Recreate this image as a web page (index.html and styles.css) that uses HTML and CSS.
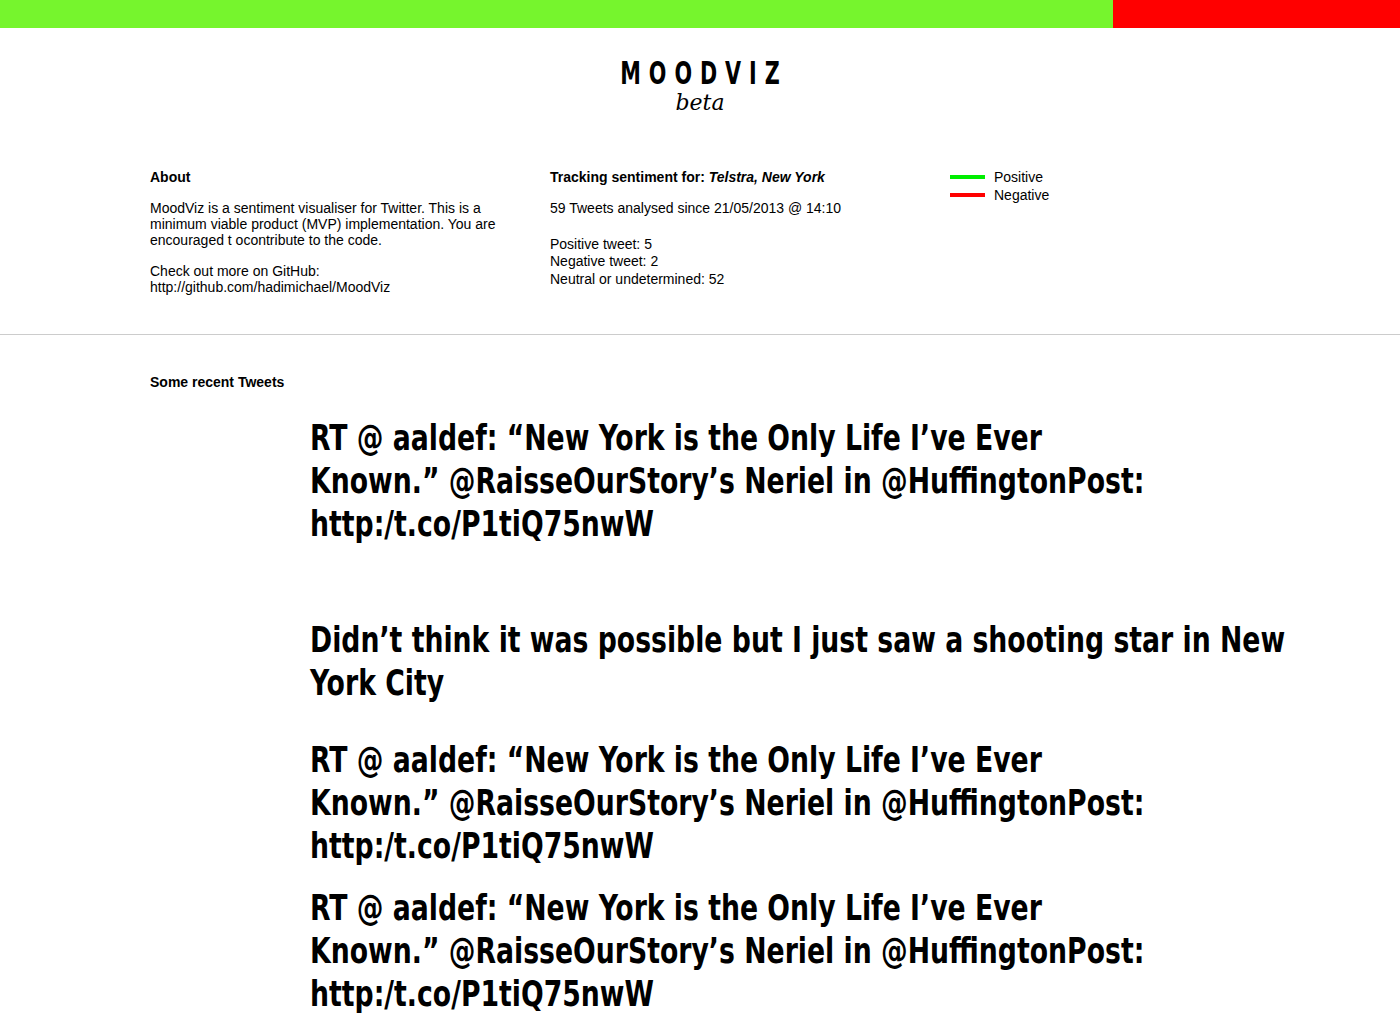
FILE: index.html
```html
<!DOCTYPE html>
<html>
<head>
<meta charset="utf-8">
<link rel="stylesheet" href="styles.css">
</head>
<body>
<div class="mood-bar">
  <div class="mood-pos"></div>
  <div class="mood-neg"></div>
</div>
<header class="brand">
  <div class="logo">MOODVIZ</div>
  <div class="beta">beta</div>
</header>
<section class="info">
  <div class="col">
    <h2>About</h2>
    <p class="about">MoodViz is a sentiment visualiser for Twitter. This is a minimum viable product (MVP) implementation. You are encouraged t ocontribute to the code.</p>
    <p class="about">Check out more on GitHub:<br>http://github.com/hadimichael/MoodViz</p>
  </div>
  <div class="col">
    <h2>Tracking sentiment for: <em>Telstra, New York</em></h2>
    <p class="stat">59 Tweets analysed since 21/05/2013 @ 14:10</p>
    <p class="stat">Positive tweet: 5<br>Negative tweet: 2<br>Neutral or undetermined: 52</p>
  </div>
  <div class="col">
    <ul class="legend">
      <li><span class="swatch pos"></span>Positive</li>
      <li><span class="swatch neg"></span>Negative</li>
    </ul>
  </div>
</section>
<hr class="rule">
<section class="recent">
  <h2>Some recent Tweets</h2>
  <div class="tweets">
    <p class="tweet">RT @ aaldef: “New York is the Only Life I’ve Ever Known.”&nbsp;@RaisseOurStory’s Neriel in @HuffingtonPost: http:/t.co/P1tiQ75nwW</p>
    <p class="tweet">Didn’t think it was possible but I just saw a shooting star in New York City</p>
    <p class="tweet">RT @ aaldef: “New York is the Only Life I’ve Ever Known.”&nbsp;@RaisseOurStory’s Neriel in @HuffingtonPost: http:/t.co/P1tiQ75nwW</p>
    <p class="tweet">RT @ aaldef: “New York is the Only Life I’ve Ever Known.”&nbsp;@RaisseOurStory’s Neriel in @HuffingtonPost: http:/t.co/P1tiQ75nwW</p>
  </div>
</section>
</body>
</html>
```
FILE: styles.css
```css
html, body {
  margin: 0;
  padding: 0;
  background: #fff;
  color: #000;
  font-family: "Liberation Sans", Arial, sans-serif;
  font-size: 14px;
  overflow-x: hidden;
}
.mood-bar {
  display: flex;
  height: 28px;
}
.mood-pos { background: #76f52d; flex: 0 0 1113px; }
.mood-neg { background: #ff0000; flex: 1; }

.brand {
  text-align: center;
  padding-top: 28px;
}
.logo {
  font-family: "DejaVu Sans Condensed", "DejaVu Sans", sans-serif;
  font-weight: bold;
  font-size: 32px;
  letter-spacing: 11px;
  line-height: 34px;
  padding-left: 11px;
  transform: scaleX(0.72);
}
.beta {
  font-family: "DejaVu Serif", serif;
  font-style: italic;
  font-size: 22px;
  line-height: 26px;
}

.info {
  width: 1100px;
  margin: 52px auto 0;
  display: grid;
  grid-template-columns: 400px 400px 300px;
}
.info h2 {
  font-size: 14px;
  font-weight: bold;
  margin: 0 0 14px;
  line-height: 18px;
}
.about {
  margin: 0 0 15px;
  line-height: 16px;
  padding-right: 40px;
}
.stat {
  margin: 0 0 18px;
  line-height: 17.5px;
}
.legend {
  list-style: none;
  margin: 0;
  padding: 0;
}
.legend li {
  display: flex;
  align-items: center;
  line-height: 18px;
}
.swatch {
  width: 35px;
  height: 4px;
  margin-right: 9px;
}
.swatch.pos { background: #00ee00; }
.swatch.neg { background: #ff0000; }

.rule {
  border: 0;
  border-top: 1px solid #cccccc;
  margin: 24px 0 0;
}

.recent {
  width: 1100px;
  margin: 38px auto 0;
}
.recent h2 {
  font-size: 14px;
  font-weight: bold;
  margin: 0;
  line-height: 18px;
}
.tweets {
  margin-left: 160px;
  margin-top: 26px;
  width: 1160px;
  transform: scaleX(0.848);
  transform-origin: left top;
}
.tweet {
  font-family: "DejaVu Sans Condensed", "DejaVu Sans", sans-serif;
  font-weight: bold;
  font-size: 35px;
  line-height: 43px;
  margin: 0;
}
.tweet:nth-child(1) { margin-bottom: 73px; }
.tweet:nth-child(2) { margin-bottom: 34px; }
.tweet:nth-child(3) { margin-bottom: 19px; }
```
